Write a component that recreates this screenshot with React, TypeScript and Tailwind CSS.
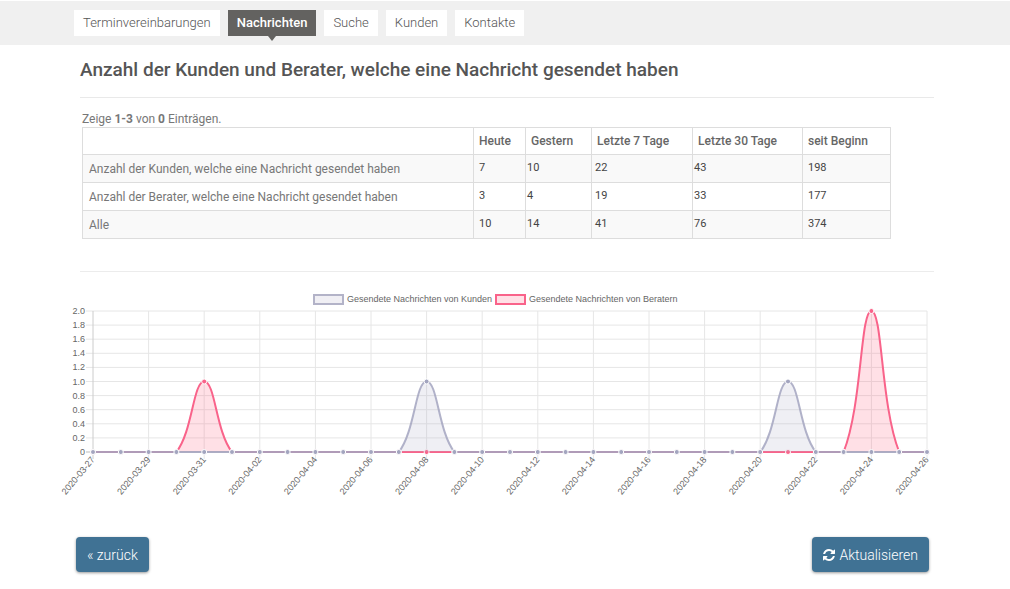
import React from 'react';

const tabs = ['Terminvereinbarungen', 'Nachrichten', 'Suche', 'Kunden', 'Kontakte'];

const columns = [
  { label: 'Heute', width: 'w-[52px]', pad: 'pl-[5px]' },
  { label: 'Gestern', width: 'w-[66px]', pad: 'pl-px' },
  { label: 'Letzte 7 Tage', width: 'w-[101px]', pad: 'pl-[3px]' },
  { label: 'Letzte 30 Tage', width: 'w-[110px]', pad: 'pl-px' },
  { label: 'seit Beginn', width: 'w-[88px]', pad: 'pl-[5px]' },
];

const rows = [
  { label: 'Anzahl der Kunden, welche eine Nachricht gesendet haben', values: [7, 10, 22, 43, 198] },
  { label: 'Anzahl der Berater, welche eine Nachricht gesendet haben', values: [3, 4, 19, 33, 177] },
  { label: 'Alle', values: [10, 14, 41, 76, 374] },
];

const dates = Array.from({ length: 31 }, (_, i) =>
  new Date(Date.UTC(2020, 2, 27 + i)).toISOString().slice(0, 10)
);

const customers = dates.map((d) => (d === '2020-04-08' || d === '2020-04-21' ? 1 : 0));
const advisors = dates.map((d) => (d === '2020-03-31' ? 1 : d === '2020-04-24' ? 2 : 0));

const LEFT = 33;
const RIGHT = 867;
const TOP = 23;
const BOTTOM = 164;
const TENSION = 0.4;

const xAt = (i: number) => LEFT + (i * (RIGHT - LEFT)) / 30;
const yAt = (v: number) => BOTTOM - (v * (BOTTOM - TOP)) / 2;
const clamp = (y: number) => Math.max(TOP, Math.min(BOTTOM, y));

// cubic spline through all points, control points kept inside the plot
const buildPath = (data: number[]) => {
  const pts = data.map((v, i) => ({ x: xAt(i), y: yAt(v) }));
  const ctrl = pts.map((p, i) => {
    const prev = pts[i - 1] ?? p;
    const next = pts[i + 1] ?? p;
    const d01 = Math.hypot(p.x - prev.x, p.y - prev.y);
    const d12 = Math.hypot(next.x - p.x, next.y - p.y);
    const fa = (TENSION * d01) / (d01 + d12);
    const fb = (TENSION * d12) / (d01 + d12);
    return {
      inX: p.x - fa * (next.x - prev.x),
      inY: clamp(p.y - fa * (next.y - prev.y)),
      outX: p.x + fb * (next.x - prev.x),
      outY: clamp(p.y + fb * (next.y - prev.y)),
    };
  });
  return pts
    .map((p, i) =>
      i === 0
        ? `M${p.x} ${p.y}`
        : `C${ctrl[i - 1].outX} ${ctrl[i - 1].outY} ${ctrl[i].inX} ${ctrl[i].inY} ${p.x} ${p.y}`
    )
    .join(' ');
};

const Series: React.FC<{ data: number[]; color: string; fill: string; lineOpacity?: number }> = ({
  data,
  color,
  fill,
  lineOpacity = 1,
}) => {
  const path = buildPath(data);
  return (
    <g>
      <path d={`${path} L${RIGHT} ${BOTTOM} L${LEFT} ${BOTTOM} Z`} fill={fill} />
      <path d={path} fill="none" stroke={color} strokeOpacity={lineOpacity} strokeWidth={2} />
      {data.map((v, i) => (
        <circle key={i} cx={xAt(i)} cy={yAt(v)} r={2.5} fill={color} stroke="#fff" strokeWidth={1} />
      ))}
    </g>
  );
};

const MessageChart: React.FC = () => (
  <svg
    viewBox="0 0 890 215"
    className="block w-full font-['Liberation_Sans',Arial,sans-serif] text-[9px]"
    role="img"
    aria-label="Gesendete Nachrichten pro Tag"
  >
    <rect x={254} y={7} width={29} height={9} fill="#f0eff4" stroke="#b3b3c8" strokeWidth={2} />
    <text x={287} y={14} fill="#666">Gesendete Nachrichten von Kunden</text>
    <rect x={436} y={7} width={29} height={9} fill="#ffe0e6" stroke="#f9638a" strokeWidth={2} />
    <text x={469} y={14} fill="#666">Gesendete Nachrichten von Beratern</text>

    {Array.from({ length: 11 }, (_, i) => {
      const y = yAt(i / 5);
      return (
        <g key={i}>
          <line x1={LEFT - 7} x2={RIGHT} y1={y} y2={y} stroke={i === 0 ? '#bbb' : '#e6e6e6'} />
          <text x={25} y={y + 3} textAnchor="end" fill="#666">{i === 0 ? '0' : (i / 5).toFixed(1)}</text>
        </g>
      );
    })}
    {dates.map((date, i) =>
      i % 2 === 0 ? (
        <g key={date}>
          <line x1={xAt(i)} x2={xAt(i)} y1={TOP} y2={BOTTOM + 7} stroke={i === 0 ? '#ccc' : '#e6e6e6'} />
          <text transform={`translate(${xAt(i)} ${BOTTOM + 6}) rotate(-50)`} textAnchor="end" y={3} fill="#666">
            {date}
          </text>
        </g>
      ) : null
    )}

    <Series data={advisors} color="#f9638a" fill="rgba(255,99,132,0.2)" />
    <Series data={customers} color="#a3a5bf" fill="rgba(176,176,198,0.2)" lineOpacity={0.85} />
  </svg>
);

const RefreshIcon: React.FC = () => (
  <svg viewBox="0 0 1536 1536" className="size-3" fill="currentColor" aria-hidden="true">
    <path d="M1511 928q0 5-1 7-64 268-268 434.5t-478 166.5q-146 0-282.5-55t-243.5-157l-129 129q-19 19-45 19t-45-19-19-45v-448q0-26 19-45t45-19h448q26 0 45 19t19 45-19 45l-137 137q71 66 161 102t187 36q134 0 250-65t186-179q11-17 53-117 8-23 30-23h192q13 0 22.5 9.5t9.5 22.5zm25-800v448q0 26-19 45t-45 19h-448q-26 0-45-19t-19-45 19-45l138-138q-148-137-349-137-134 0-250 65t-186 179q-11 17-53 117-8 23-30 23h-199q-13 0-22.5-9.5t-9.5-22.5v-7q65-268 270-434.5t480-166.5q146 0 284 55.5t245 156.5l130-129q19-19 45-19t45 19 19 45z" />
  </svg>
);

const App: React.FC = () => {
  return (
    <div className="bg-white font-[Roboto,sans-serif] text-[#555]">
      <nav className="flex gap-2 border-t border-white bg-[#f0f0f0] pt-[9px] pb-[9px] pl-[74px]">
        {tabs.map((tab) =>
          tab === 'Nachrichten' ? (
            <a key={tab} href="#" aria-current="page" className="relative bg-[#636260] px-[9px] py-[3px] text-[13px] leading-5 font-medium text-white">
              {tab}
              <span className="absolute top-full left-1/2 -ml-1 border-x-4 border-t-5 border-x-transparent border-t-[#636260]" />
            </a>
          ) : (
            <a key={tab} href="#" className="bg-white px-[9px] py-[3px] text-[13px] leading-5 font-light text-[#555]">
              {tab}
            </a>
          )
        )}
      </nav>

      <main className="px-[60px]">
        <div className="mr-4 ml-5">
          <h1 className="border-b border-[#e9e9e9] pt-3 pb-[14px] text-[19px] leading-[26px] font-medium text-[#555]">
            Anzahl der Kunden und Berater, welche eine Nachricht gesendet haben
          </h1>
          <section className="border-b border-[#ececec] pt-[13px] pr-[43px] pb-8 pl-[2px] text-xs">
            <p className="leading-4 text-[#777]">
              Zeige <b>1-3</b> von <b>0</b> Einträgen.
            </p>
            <table className="w-full table-fixed border-collapse border border-[#ddd]">
              <thead>
                <tr className="h-[27px]">
                  <th className="border border-[#ddd]" />
                  {columns.map((c) => (
                    <th key={c.label} scope="col" className={`${c.width} border border-[#ddd] pl-[5px] text-left font-medium whitespace-nowrap text-[#666]`}>
                      {c.label}
                    </th>
                  ))}
                </tr>
              </thead>
              <tbody>
                {rows.map((row) => (
                  <tr key={row.label} className="h-[28px] odd:bg-[#f9f9f9]">
                    <td className="border border-[#ddd] pl-[6px] text-[#777]">{row.label}</td>
                    {row.values.map((value, i) => (
                      <td key={i} className={`${columns[i].pad} border border-[#ddd] text-[11px] text-[#444]`}>
                        {value}
                      </td>
                    ))}
                  </tr>
                ))}
              </tbody>
            </table>
          </section>
        </div>

        <div className="pt-4">
          <MessageChart />
        </div>

        <div className="mr-[21px] ml-4 flex items-center justify-between pt-[34px] pb-4">
          <button type="button" className="h-[35px] rounded bg-[#407294] px-[11px] text-sm font-light text-white shadow-[0_1px_3px_rgba(0,0,0,0.4)]">
            « zurück
          </button>
          <button type="button" className="flex h-[35px] items-center gap-1 rounded bg-[#407294] px-[11px] text-sm font-light text-white shadow-[0_1px_3px_rgba(0,0,0,0.4)]">
            <RefreshIcon />
            Aktualisieren
          </button>
        </div>
      </main>
    </div>
  );
};

export default App;
